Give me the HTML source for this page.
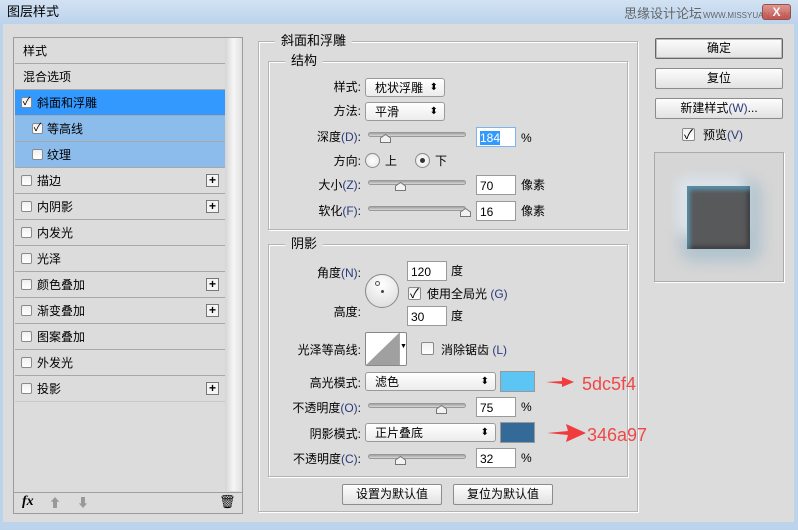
<!DOCTYPE html>
<html><head><meta charset="utf-8"><style>
*{box-sizing:border-box;margin:0;padding:0}
body{width:798px;height:530px;overflow:hidden;background:#bcd3ec;font-family:"Liberation Sans","Noto Sans CJK SC",sans-serif;font-size:12px;color:#000;position:relative}
.a{position:absolute}
.t{position:absolute;white-space:nowrap;line-height:14px}
.row{position:absolute;left:15px;width:210px;height:26px;border-bottom:1px solid #a8a8a8;background:#dcdcdc}
.row span{position:absolute;top:6px;line-height:14px}
.cb{position:absolute;width:11px;height:11px;border:1px solid #8a8a8a;background:linear-gradient(#f0f0f0,#fff);border-radius:2px}
.plus{position:absolute;left:191px;top:6px;width:13px;height:13px;border:1px solid #777;background:#f4f4f4;font-size:12px;line-height:10px;text-align:center;font-weight:bold}
.grp{position:absolute;border:1px solid #b4b4b4;box-shadow:inset 1px 1px 0 #fff,1px 1px 0 #fff}
.lg{position:absolute;background:#dcdcdc;padding:0 6px;font-size:13px;line-height:14px}
.dd{position:absolute;height:19px;border:1px solid #9a9a9a;border-radius:3px;background:linear-gradient(#fff,#ececec);padding:2px 0 0 9px;line-height:14px}
.dd:after{content:"⬍";position:absolute;right:6px;top:2px;font-size:10px}
.inp{position:absolute;width:40px;height:20px;border:1px solid #9a9a9a;background:#fff;padding:3px 0 0 3px;line-height:14px}
.tr{position:absolute;width:98px;height:5px;border-radius:3px;background:linear-gradient(#a0a0a0,#d8d8d8);border:1px solid #999}
.th{position:absolute;width:11px;height:9px}
.btn{position:absolute;height:21px;border:1px solid #8c8c8c;border-radius:2px;background:linear-gradient(#fdfdfd,#e2e2e2);text-align:center;line-height:18px}
.lb{position:absolute;text-align:right;width:100px;line-height:14px}
.b{color:#2a3a7a}
.rad{position:absolute;width:15px;height:15px;border:1px solid #8a8a8a;border-radius:50%;background:radial-gradient(#fff,#e4e4e4)}
</style></head><body>
<div class="a" style="left:0;top:0;width:798px;height:24px;background:linear-gradient(#d2e2f3,#bcd3ec)"></div>
<div class="t" style="left:7px;top:5px;font-size:13px">图层样式</div>
<div class="t" style="left:624px;top:7px;font-size:13px;color:#666">思缘设计论坛</div>
<div class="t" style="left:703px;top:9px;font-size:8px;color:#666">WWW.MISSYUAN.COM</div>
<div class="a" style="left:762px;top:4px;width:29px;height:16px;background:linear-gradient(#e08a7e,#c7443a);border:1px solid #8a3a33;border-radius:3px;color:#fff;text-align:center;font-weight:bold;line-height:14px;opacity:.85">X</div>
<div class="a" style="left:3px;top:24px;width:791px;height:498px;background:#dcdcdc"></div>

<div class="a" style="left:13px;top:37px;width:230px;height:477px;border:1px solid #9c9c9c;background:#dcdcdc"></div>
<div class="a" style="left:225px;top:38px;width:17px;height:453px;background:linear-gradient(90deg,#d4d4d4,#f6f6f6 50%,#e0e0e0)"></div>
<div class="row" style="top:38px"><span style="left:8px">样式</span></div>
<div class="row" style="top:64px"><span style="left:8px">混合选项</span></div>
<div class="row" style="top:90px;background:#3399ff"><div class="cb" style="left:6px;top:7px;text-align:center;line-height:9px;font-size:11px">✓</div><span style="left:22px">斜面和浮雕</span></div>
<div class="row" style="top:116px;background:#8bbcec"><div class="cb" style="left:17px;top:7px;line-height:9px;font-size:11px;text-align:center">✓</div><span style="left:32px">等高线</span></div>
<div class="row" style="top:142px;background:#8bbcec"><div class="cb" style="left:17px;top:7px"></div><span style="left:32px">纹理</span></div>
<div class="row" style="top:168px"><div class="cb" style="left:6px;top:7px"></div><span style="left:22px">描边</span><div class="plus">+</div></div>
<div class="row" style="top:194px"><div class="cb" style="left:6px;top:7px"></div><span style="left:22px">内阴影</span><div class="plus">+</div></div>
<div class="row" style="top:220px"><div class="cb" style="left:6px;top:7px"></div><span style="left:22px">内发光</span></div>
<div class="row" style="top:246px"><div class="cb" style="left:6px;top:7px"></div><span style="left:22px">光泽</span></div>
<div class="row" style="top:272px"><div class="cb" style="left:6px;top:7px"></div><span style="left:22px">颜色叠加</span><div class="plus">+</div></div>
<div class="row" style="top:298px"><div class="cb" style="left:6px;top:7px"></div><span style="left:22px">渐变叠加</span><div class="plus">+</div></div>
<div class="row" style="top:324px"><div class="cb" style="left:6px;top:7px"></div><span style="left:22px">图案叠加</span></div>
<div class="row" style="top:350px"><div class="cb" style="left:6px;top:7px"></div><span style="left:22px">外发光</span></div>
<div class="row" style="top:376px;border-bottom-color:#c8c8c8"><div class="cb" style="left:6px;top:7px"></div><span style="left:22px">投影</span><div class="plus">+</div></div>
<div class="a" style="left:14px;top:492px;width:228px;height:1px;background:#a0a0a0"></div>
<div class="t" style="left:22px;top:495px;font-style:italic;font-weight:bold;font-family:'Liberation Serif',serif;font-size:14px">fx</div>
<div class="t" style="left:49px;top:496px;color:#999">⬆</div>
<div class="t" style="left:77px;top:496px;color:#999">⬇</div>
<div class="t" style="left:219px;top:495px;font-size:13px">🗑</div>

<div class="grp" style="left:258px;top:41px;width:380px;height:471px"></div>
<div class="lg" style="left:275px;top:34px">斜面和浮雕</div>
<div class="grp" style="left:268px;top:61px;width:360px;height:169px"></div>
<div class="lg" style="left:285px;top:54px">结构</div>
<div class="grp" style="left:268px;top:244px;width:360px;height:233px"></div>
<div class="lg" style="left:285px;top:237px">阴影</div>

<div class="lb" style="left:261px;top:80px">样式:</div><div class="dd" style="left:365px;top:78px;width:80px">枕状浮雕</div>
<div class="lb" style="left:261px;top:104px">方法:</div><div class="dd" style="left:365px;top:102px;width:80px">平滑</div>
<div class="lb" style="left:261px;top:130px">深度<span class="b">(D)</span>:</div>
<div class="tr" style="left:368px;top:132px"></div>
<svg class="th" style="left:380px;top:134px" viewBox="0 0 11 9"><path d="M.5 8.5V4L5.5.5 10.5 4v4.5z" fill="#f2f2f2" stroke="#777"/></svg>
<div class="inp" style="left:476px;top:127px;border-color:#7eb4ea"><span style="background:#3399ff;color:#fff">184</span></div><div class="t" style="left:521px;top:131px">%</div>
<div class="lb" style="left:261px;top:154px">方向:</div>
<div class="rad" style="left:365px;top:153px"></div><div class="t" style="left:385px;top:154px">上</div>
<div class="rad" style="left:415px;top:153px"></div><div class="a" style="left:420px;top:158px;width:5px;height:5px;border-radius:50%;background:#333"></div><div class="t" style="left:435px;top:154px">下</div>
<div class="lb" style="left:261px;top:178px">大小<span class="b">(Z)</span>:</div>
<div class="tr" style="left:368px;top:180px"></div>
<svg class="th" style="left:395px;top:182px" viewBox="0 0 11 9"><path d="M.5 8.5V4L5.5.5 10.5 4v4.5z" fill="#f2f2f2" stroke="#777"/></svg>
<div class="inp" style="left:476px;top:175px">70</div><div class="t" style="left:521px;top:178px">像素</div>
<div class="lb" style="left:261px;top:204px">软化<span class="b">(F)</span>:</div>
<div class="tr" style="left:368px;top:206px"></div>
<svg class="th" style="left:460px;top:208px" viewBox="0 0 11 9"><path d="M.5 8.5V4L5.5.5 10.5 4v4.5z" fill="#f2f2f2" stroke="#777"/></svg>
<div class="inp" style="left:476px;top:201px">16</div><div class="t" style="left:521px;top:204px">像素</div>

<div class="lb" style="left:261px;top:266px">角度<span class="b">(N)</span>:</div>
<div class="a" style="left:365px;top:274px;width:34px;height:34px;border:1px solid #888;border-radius:50%;background:radial-gradient(circle at 50% 30%,#fff,#d8d8d8)"></div>
<div class="a" style="left:375px;top:281px;width:5px;height:5px;border:1px solid #555;border-radius:50%"></div>
<div class="a" style="left:381px;top:290px;width:3px;height:3px;background:#444;border-radius:50%"></div>
<div class="inp" style="left:407px;top:261px">120</div><div class="t" style="left:451px;top:264px">度</div>
<div class="cb" style="left:408px;top:287px;width:13px;height:13px;font-size:13px;line-height:11px;text-align:center">✓</div>
<div class="t" style="left:427px;top:287px">使用全局光 <span class="b">(G)</span></div>
<div class="lb" style="left:261px;top:305px">高度:</div>
<div class="inp" style="left:407px;top:306px">30</div><div class="t" style="left:451px;top:309px">度</div>
<div class="lb" style="left:261px;top:343px">光泽等高线:</div>
<div class="a" style="left:365px;top:332px;width:42px;height:34px;border:1px solid #888;background:#fff;border-radius:2px"></div>
<svg class="a" style="left:366px;top:333px" width="33" height="32"><path d="M0 32L33 0V32z" fill="#a0a0a0"/></svg>
<div class="a" style="left:399px;top:333px;width:1px;height:32px;background:#aaa"></div>
<div class="t" style="left:400px;top:340px;font-size:7px">▼</div>
<div class="cb" style="left:421px;top:342px;width:13px;height:13px"></div>
<div class="t" style="left:441px;top:343px">消除锯齿 <span class="b">(L)</span></div>

<div class="lb" style="left:261px;top:376px">高光模式:</div>
<div class="dd" style="left:365px;top:372px;width:131px">滤色</div>
<div class="a" style="left:500px;top:371px;width:35px;height:21px;background:#5dc5f4;border:1px solid #999"></div>
<div class="lb" style="left:261px;top:401px">不透明度<span class="b">(O)</span>:</div>
<div class="tr" style="left:368px;top:403px"></div>
<svg class="th" style="left:436px;top:405px" viewBox="0 0 11 9"><path d="M.5 8.5V4L5.5.5 10.5 4v4.5z" fill="#f2f2f2" stroke="#777"/></svg>
<div class="inp" style="left:476px;top:397px">75</div><div class="t" style="left:521px;top:400px">%</div>
<div class="lb" style="left:261px;top:427px">阴影模式:</div>
<div class="dd" style="left:365px;top:423px;width:131px">正片叠底</div>
<div class="a" style="left:500px;top:422px;width:35px;height:21px;background:#346a97;border:1px solid #999"></div>
<div class="lb" style="left:261px;top:452px">不透明度<span class="b">(C)</span>:</div>
<div class="tr" style="left:368px;top:454px"></div>
<svg class="th" style="left:395px;top:456px" viewBox="0 0 11 9"><path d="M.5 8.5V4L5.5.5 10.5 4v4.5z" fill="#f2f2f2" stroke="#777"/></svg>
<div class="inp" style="left:476px;top:448px">32</div><div class="t" style="left:521px;top:451px">%</div>

<svg class="a" style="left:544px;top:372px" width="50" height="76"><path d="M2 10L18 9 18 5 30 10 18 15 18 12z" fill="#f03c3c"/><path d="M3 61L24 59 22 52 42 61 22 70 24 63z" fill="#f03c3c"/></svg>
<div class="t" style="left:582px;top:374px;font-size:18px;line-height:20px;color:#f04848">5dc5f4</div>
<div class="t" style="left:587px;top:425px;font-size:18px;line-height:20px;color:#f04848">346a97</div>

<div class="btn" style="left:342px;top:484px;width:100px">设置为默认值</div>
<div class="btn" style="left:453px;top:484px;width:100px">复位为默认值</div>

<div class="btn" style="left:655px;top:38px;width:128px;border-color:#666;box-shadow:inset 0 0 0 1px #bbb">确定</div>
<div class="btn" style="left:655px;top:68px;width:128px">复位</div>
<div class="btn" style="left:655px;top:98px;width:128px">新建样式<span class="b">(W)</span>...</div>
<div class="cb" style="left:682px;top:128px;width:13px;height:13px;font-size:13px;line-height:11px;text-align:center">✓</div>
<div class="t" style="left:703px;top:128px">预览<span class="b">(V)</span></div>
<div class="a" style="left:654px;top:152px;width:130px;height:130px;border:1px solid #aaa;background:#d6d6d6;box-shadow:1px 1px 0 #fff"></div>
<div class="a" style="left:680px;top:180px;width:82px;height:82px;border-radius:14px;background:rgba(150,180,200,.55);filter:blur(7px)"></div>
<div class="a" style="left:676px;top:176px;width:70px;height:60px;border-radius:12px;background:rgba(235,240,245,.7);filter:blur(6px)"></div>
<div class="a" style="left:687px;top:186px;width:63px;height:63px;background:#58595b;box-shadow:inset 3px 4px 4px rgba(93,197,244,.5),inset -3px -3px 4px rgba(0,0,0,.3)"></div>
</body></html>
